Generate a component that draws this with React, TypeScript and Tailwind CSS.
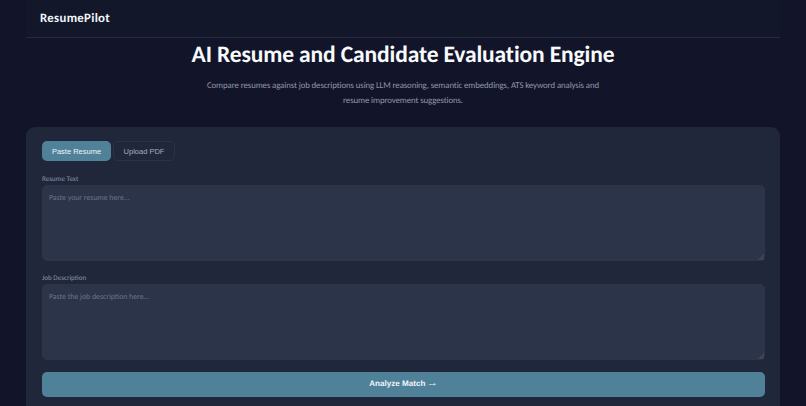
import React from 'react';

const sans = "font-['Carlito','Lato',sans-serif] [text-rendering:geometricPrecision]";

export default function App() {
  return (
    <div className="h-[406px] w-full overflow-hidden bg-[#12152a] px-[26px]">
      {/* Navbar */}
      <div className="flex h-[38px] items-center border-b border-[#232a40] bg-[#13172a] px-[14px]">
        <span className={`${sans} text-[12.8px] font-bold tracking-[0.3px] text-[#f1f5f9]`}>ResumePilot</span>
      </div>

      {/* Hero */}
      <h1 className={`${sans} pt-[1px] text-center text-[23.5px] leading-[33px] font-bold tracking-[-0.12px] text-[#f8fafc]`}>
        AI Resume and Candidate Evaluation Engine
      </h1>
      <p className={`${sans} mx-auto mt-[7px] w-[420px] text-center text-[8.8px] leading-[15px] tracking-[-0.1px] text-[#9097a8]`}>
        Compare resumes against job descriptions using LLM reasoning, semantic embeddings, ATS keyword analysis and resume improvement suggestions.
      </p>

      {/* Card */}
      <div className="mt-[18px] rounded-t-[9px] bg-[#20273a] pt-[14px] pr-[15px] pb-[20px] pl-[16px]">
        <div className="flex gap-[2px] font-['Liberation_Sans',sans-serif] text-[7.5px] [text-rendering:geometricPrecision]">
          <button className="h-[20px] w-[69px] rounded-[5px] bg-[#4f8299] pt-[1px] text-[#f1f5f9]">Paste Resume</button>
          <button className="h-[20px] w-[62px] rounded-[5px] border border-[#29324a] pt-[1px] text-[#a3adbe]">Upload PDF</button>
        </div>

        <Field label="Resume Text" placeholder="Paste your resume here..." className="mt-[13px]" />
        <Field label="Job Description" placeholder="Paste the job description here..." className="mt-[12px]" />

        <button className="mt-[12px] h-[25px] w-full rounded-[5px] bg-[#4f8299] font-['Liberation_Sans',sans-serif] text-[8.1px] font-bold text-[#f1f5f9] [text-rendering:geometricPrecision]">
          Analyze Match <span className="-ml-[1px] text-[11px] leading-[8px] font-normal">→</span>
        </button>
      </div>
    </div>
  );
}

function Field({ label, placeholder, className }: { label: string; placeholder: string; className: string }) {
  return (
    <div className={className}>
      <div className={`${sans} h-[11px] pt-[1px] text-[7.1px] leading-[8px] text-[#8a94a8]`}>{label}</div>
      <textarea
        readOnly
        placeholder={placeholder}
        className={`${sans} block h-[76px] w-full rounded-[5px] border border-[#2c3549] bg-[#2b3449] px-[6px] py-[7px] text-[7.8px] leading-[11px] text-[#cbd5e1] outline-none placeholder:text-[#6b7486] [&::-webkit-resizer]:bg-[linear-gradient(135deg,transparent_78%,#3b4457_78%)]`}
      />
    </div>
  );
}
